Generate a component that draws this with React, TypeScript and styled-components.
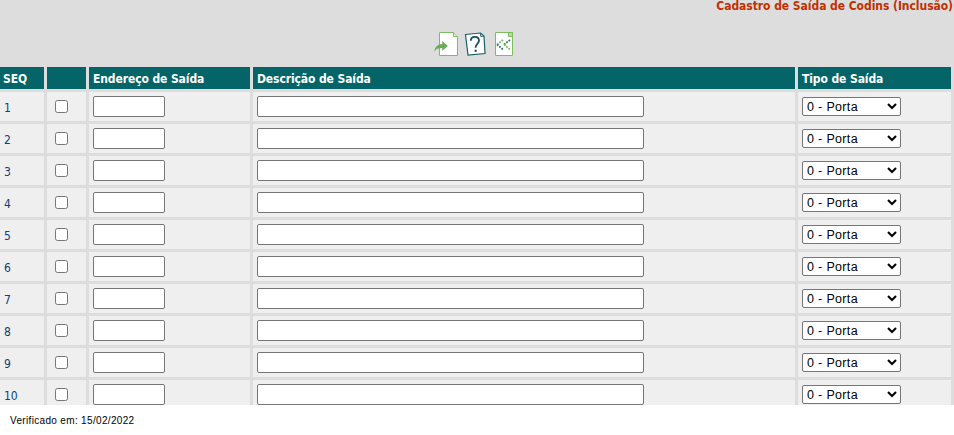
import React from 'react';
import styled, { createGlobalStyle } from 'styled-components';

const GlobalStyle = createGlobalStyle`
  * { box-sizing: border-box; }
  body { margin: 0; background: #fff; overflow: hidden; }
`;

const tahoma = `Tahoma, 'DejaVu Sans Condensed', 'DejaVu Sans', sans-serif`;

const Screen = styled.main`
  width: 954px;
  height: 435px;
  overflow: hidden;
  background: #fff;
`;

const Panel = styled.section`
  height: 405px;
  overflow: hidden;
  background: #dddddd;
`;

const Title = styled.h1`
  margin: 0;
  height: 32px;
  padding-right: 1px;
  text-align: right;
  white-space: nowrap;
  font: bold 12px/13px ${tahoma};
  letter-spacing: -0.05px;
  color: #c03000;
`;

const Toolbar = styled.nav`
  display: flex;
  height: 35px;
  padding-left: 434px;
  gap: 5px;
`;

const ToolButton = styled.button`
  width: 24px;
  height: 24px;
  padding: 0;
  border: 0;
  background: none;
  svg { display: block; }
`;

const Grid = styled.div`
  display: grid;
  gap: 3px;
`;

const Row = styled.div`
  display: grid;
  grid-template-columns: 44px 39px 161px 542px 153px;
  column-gap: 3px;
  height: 29px;
`;

const HeaderRow = styled(Row)`
  height: 22px;
`;

const HeaderCell = styled.div`
  padding-left: 4px;
  background: #046468;
  color: #fff;
  white-space: nowrap;
  font: bold 12px/24px ${tahoma};
  letter-spacing: -0.1px;
  height: 22px;

  &:first-child { padding-left: 3px; }
`;

const Cell = styled.div<{ $inset?: number; $top?: number }>`
  padding: ${(p) => p.$top ?? 4}px 0 0 ${(p) => p.$inset ?? 4}px;
  background: #efefef;
`;

const Seq = styled.span`
  display: block;
  color: #0a437c;
  font: 12px/25px ${tahoma};
`;

const Check = styled.input`
  display: block;
  width: 13px;
  height: 13px;
  margin: 0;
`;

const Field = styled.input<{ $width: number }>`
  display: block;
  width: ${(p) => p.$width}px;
  height: 21px;
  margin: 0;
  padding: 1px 2px;
  border: 1px solid #767676;
  border-radius: 2px;
  background: #fff;
  font: 13.33px 'Liberation Sans', Arial, sans-serif;
`;

const Select = styled.select`
  display: block;
  width: 99px;
  height: 19px;
  margin: 0;
  padding: 0;
  border: 1px solid #767676;
  border-radius: 2px;
  background: #fff;
  color: #000;
  font: 12.5px 'Liberation Sans', Arial, sans-serif;
  letter-spacing: 0.33px;
`;

const Footer = styled.footer`
  padding: 9px 0 0 10px;
  color: #000;
  font: 10px/14px 'Liberation Sans', Arial, sans-serif;
  letter-spacing: 0.33px;
`;

const ShareIcon = () => (
  <svg width="24" height="24" viewBox="0 0 24 24">
    <path d="M5.5.5h14l4 4v19h-18z" fill="#fff" stroke="#7cbd62" />
    <path d="M19.5.5v4h4" fill="#d5ebcc" stroke="#7cbd62" />
    <path d="M.3 19.5C1 14.5 4 12.2 8.300 12V9l5.500 5.100-5.500 5v-3C4.500 16 2.500 17 .3 19.500z" fill="#69ad55" />
  </svg>
);

const HelpIcon = () => (
  <svg width="24" height="24" viewBox="0 0 24 24">
    <path d="M2.500 2.500 17.500 1l3.500 3 1 17.500L5 23z" fill="#fff" stroke="#1b6068" strokeWidth="1.200" />
    <path d="m17.500 1 .3 3.500 3.200-.5" fill="none" stroke="#1b6068" />
    <path d="M7.800 8.800c0-2.600 1.600-4 4-4 2.600 0 4.200 1.400 4.200 3.800 0 3.300-3.500 3.500-3.500 7.200" fill="none" stroke="#174f58" strokeWidth="1.800" />
    <path d="M11.600 17.700h2v2.200h-2z" fill="#174f58" />
  </svg>
);

const BackIcon = () => (
  <svg width="24" height="24" viewBox="0 0 24 24">
    <path d="M3.500.5h17v23h-17z" fill="#fff" stroke="#7cbd62" />
    <path d="M16.500.5v4h4v-4z" fill="#b7dba8" stroke="#7cbd62" />
    <g fill="none" strokeWidth="1.800" strokeDasharray="1.800 1.100">
      <path d="m5 12.500 6-4.500" stroke="#78b95e" />
      <path d="m5 12.500 6 5" stroke="#2b7460" />
      <path d="m12 12.500 6-4.500" stroke="#2b7460" />
      <path d="m12 12.500 6 5" stroke="#78b95e" />
    </g>
  </svg>
);

const headers = ['SEQ', '', 'Endereço de Saída', 'Descrição de Saída', 'Tipo de Saída'];
const rows = Array.from({ length: 10 }, (_, i) => i + 1);

export default function App() {
  return (
    <Screen>
      <GlobalStyle />
      <Panel>
        <Title>Cadastro de Saída de Codins (Inclusão)</Title>
        <Toolbar>
          <ToolButton><ShareIcon /></ToolButton>
          <ToolButton><HelpIcon /></ToolButton>
          <ToolButton><BackIcon /></ToolButton>
        </Toolbar>
        <Grid>
          <HeaderRow>
            {headers.map((h, i) => <HeaderCell key={i}>{h}</HeaderCell>)}
          </HeaderRow>
          {rows.map((n) => (
            <Row key={n}>
              <Cell><Seq>{n}</Seq></Cell>
              <Cell $inset={8} $top={8}><Check type="checkbox" /></Cell>
              <Cell><Field $width={72} /></Cell>
              <Cell><Field $width={387} /></Cell>
              <Cell $top={5}>
                <Select defaultValue="0"><option value="0">0 - Porta</option></Select>
              </Cell>
            </Row>
          ))}
        </Grid>
      </Panel>
      <Footer>Verificado em: 15/02/2022</Footer>
    </Screen>
  );
}
